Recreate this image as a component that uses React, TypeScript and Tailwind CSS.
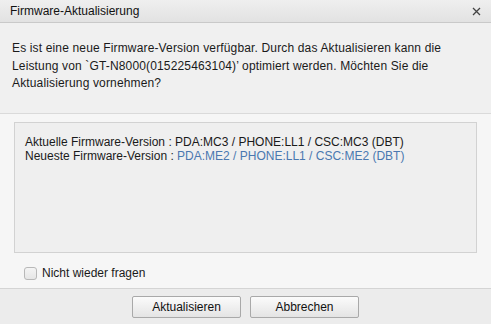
import React from 'react';

const font = { fontFamily: '"Liberation Sans", Arial, sans-serif' };

const App: React.FC = () => {
    return (
        <div className="w-[491px] h-[324px] flex flex-col bg-[#f6f6f6] text-[12px] text-[#1a1a1a] overflow-hidden" style={font}>
            {/* Title bar */}
            <div className="h-[23px] flex items-center justify-between pl-[10px] pr-[8px] bg-gradient-to-b from-[#efefef] to-[#e2e2e2] border-b border-[#c9c9c9]">
                <span className="text-[12px] text-[#111]">Firmware-Aktualisierung</span>
                <svg width="9" height="9" viewBox="0 0 9 9" className="mr-[2px]">
                    <path d="M1 1 L8 8 M8 1 L1 8" stroke="#444" strokeWidth="1.3" />
                </svg>
            </div>

            {/* Message */}
            <div className="h-[91px] bg-[#f0f0f0] border-b border-[#dadada] px-[12px] pt-[17px] leading-[17.5px] tracking-[0.15px] whitespace-nowrap">
                Es ist eine neue Firmware-Version verfügbar. Durch das Aktualisieren kann die
                <br />
                Leistung von `GT-N8000(015225463104)’ optimiert werden. Möchten Sie die
                <br />
                Aktualisierung vornehmen?
            </div>

            {/* Version info */}
            <div className="flex-1 flex flex-col px-[14px] pt-[8px]">
                <div className="h-[131px] w-[463px] bg-[#efefef] border border-[#d2d2d2] px-[10px] pt-[13px] leading-[13.5px]">
                    <div>Aktuelle Firmware-Version : PDA:MC3 / PHONE:LL1 / CSC:MC3 (DBT)</div>
                    <div>
                        Neueste Firmware-Version : <span className="text-[#4a78b0]">PDA:ME2 / PHONE:LL1 / CSC:ME2 (DBT)</span>
                    </div>
                </div>
                <label className="flex items-center gap-[5px] mt-[11px] ml-[10px]">
                    <span className="w-[13px] h-[13px] rounded-[3px] border border-[#b8b8b8] bg-gradient-to-b from-[#f4f4f4] to-[#e6e6e6]" />
                    <span>Nicht wieder fragen</span>
                </label>
            </div>

            {/* Footer */}
            <div className="h-[36px] bg-[#ececec] border-t border-[#d4d4d4] flex items-center justify-center gap-[9px] pt-[1px]">
                <button className="w-[109px] h-[22px] border border-[#a9a9a9] rounded-[2px] bg-gradient-to-b from-[#fbfbfb] to-[#e4e4e4] text-[12px] text-[#111]">
                    Aktualisieren
                </button>
                <button className="w-[109px] h-[22px] border border-[#a9a9a9] rounded-[2px] bg-gradient-to-b from-[#fbfbfb] to-[#e4e4e4] text-[12px] text-[#111]">
                    Abbrechen
                </button>
            </div>
        </div>
    );
};

export default App;
